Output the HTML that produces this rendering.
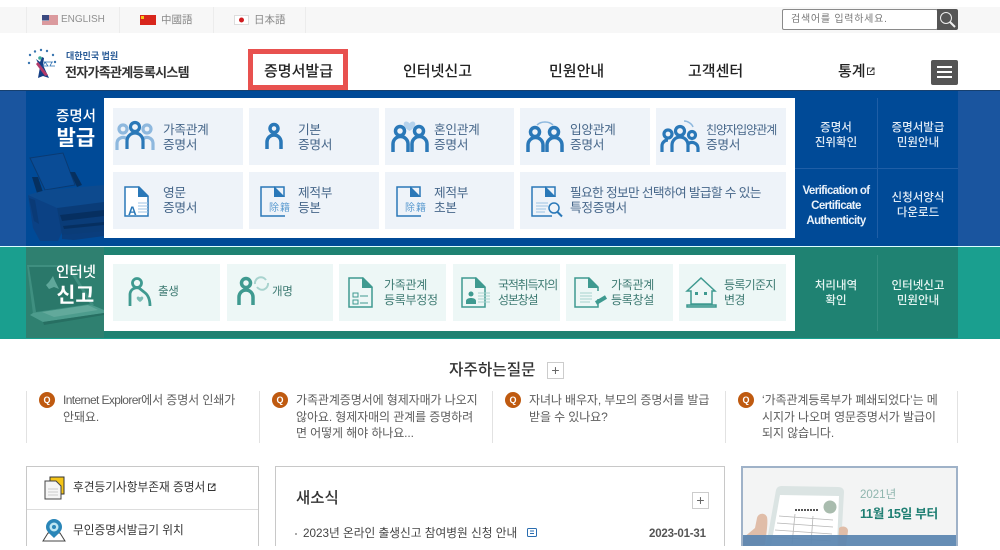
<!DOCTYPE html>
<html lang="ko"><head><meta charset="utf-8"><title>전자가족관계등록시스템</title>
<style>
*{box-sizing:border-box}
html,body{margin:0;padding:0}
body{width:1000px;height:550px;overflow:hidden;position:relative;background:#fff;font-family:"Liberation Sans","Noto Sans CJK KR",sans-serif;color:#333}
#w{position:absolute;left:0;top:0;width:1000px;height:546px;overflow:hidden}
.a{position:absolute}
.t{position:absolute;white-space:nowrap}
.nav{position:absolute;top:61px;font-size:15px;font-weight:500;color:#222;line-height:20px;white-space:nowrap;font-family:"Noto Sans CJK KR",sans-serif}
.tile{position:absolute;background:#eef3f9;height:57px}
.tile.g{background:#edf7f6}
.lbl{position:absolute;font-size:12.700px;line-height:15px;color:#47678a;white-space:nowrap;letter-spacing:-.3px}
.g .lbl{color:#3d7a72;font-size:12px}
.side{position:absolute;color:#dfeaf5;font-size:11.500px;line-height:15px;text-align:center;font-weight:500;white-space:nowrap}
.faq{position:absolute;top:392px;font-size:12px;line-height:16.500px;color:#5c5c5c;white-space:nowrap;letter-spacing:-.1px}
.q{position:absolute;top:392px;width:16px;height:16px;border-radius:50%;background:#bf5a10;color:#fff;font-size:9px;font-weight:700;line-height:16px;text-align:center}
.vl{position:absolute;top:391px;height:52px;width:1px;background:#e2e2e2}
.h{position:absolute;white-space:nowrap;font-weight:500;color:#333;font-family:"Noto Sans CJK KR",sans-serif}
.plus{position:absolute;width:17px;height:17px;border:1px solid #ccc;color:#666;font-size:14px;line-height:14px;text-align:center}
svg{position:absolute;overflow:visible}
</style></head><body><div id="w">
<div class="a" style="left:0;top:7px;width:1000px;height:26px;background:#f7f7f7"></div>
<div class="a" style="left:26px;top:7px;width:1px;height:26px;background:#ececec"></div>
<div class="a" style="left:119px;top:7px;width:1px;height:26px;background:#ececec"></div>
<div class="a" style="left:213px;top:7px;width:1px;height:26px;background:#ececec"></div>
<div class="a" style="left:305px;top:7px;width:1px;height:26px;background:#ececec"></div>
<svg style="left:42px;top:15px" width="16" height="10"><rect width="16" height="10" fill="#eee"/><path d="M0 1h16M0 3h16M0 5h16M0 7h16M0 9h16" stroke="#c8474f" stroke-width="1"/><rect width="7" height="5.500" fill="#3c4a80"/></svg>
<div class="t" style="left:61px;top:13px;font-size:10px;line-height:14px;color:#909090">ENGLISH</div>
<svg style="left:140px;top:15px" width="16" height="10"><rect width="16" height="10" fill="#d8261c"/><rect x="1" y="1" width="3" height="3" fill="#f5c518"/></svg>
<div class="t" style="left:161px;top:13px;font-size:10.500px;line-height:14px;color:#888">中國語</div>
<svg style="left:234px;top:15px" width="15" height="10"><rect x=".5" y=".5" width="14" height="9" fill="#fff" stroke="#ddd"/><circle cx="7.500" cy="5" r="2.500" fill="#d01c1f"/></svg>
<div class="t" style="left:254px;top:13px;font-size:10.500px;line-height:14px;color:#888">日本語</div>
<div class="a" style="left:782px;top:9px;width:156px;height:21px;background:#fff;border:1px solid #8a8a8a;border-radius:2px"></div>
<div class="t" style="left:791px;top:12.500px;font-size:10px;line-height:14px;color:#777;letter-spacing:.75px">검색어를 입력하세요.</div>
<div class="a" style="left:937px;top:9px;width:21px;height:21px;background:#555;border-radius:0 2px 2px 0"></div>
<svg style="left:937px;top:9px" width="21" height="21" fill="none" stroke="#eee"><circle cx="9" cy="9" r="5.500" stroke-width="1"/><path d="M13 13l5 5" stroke-width="2"/></svg>

<svg style="left:27px;top:48px" width="32" height="33"><g fill="#3a76b0"><circle cx="3" cy="7" r="1.200"/><circle cx="8" cy="3.500" r="1.200"/><circle cx="14" cy="2" r="1.200"/><circle cx="20" cy="3" r="1.200"/><circle cx="26" cy="7" r="1.200"/><circle cx="2" cy="15" r="1.200"/><circle cx="28" cy="14" r="1.200"/></g><path d="M9 11l4 3 2-5 2 1-1 7 6 13-6-2-5 2 2-11z" fill="#153f85"/><path d="M11 14l10 13-3 1-9-12z" fill="#b43a6a"/><circle cx="13" cy="10" r="1.800" fill="#3aa89a"/><path d="M17 14h9M18 14l-2 4h5zM25 14l-2 4h5" stroke="#2a6db0" fill="none" stroke-width=".8"/></svg>
<div class="t" style="left:66px;top:50px;font-size:9px;line-height:13px;font-weight:700;color:#2b5c97">대한민국 법원</div>
<div class="t" style="left:65px;top:63.500px;font-size:13px;line-height:18px;font-weight:700;color:#333;letter-spacing:-.7px">전자가족관계등록시스템</div>

<div class="a" style="left:248px;top:49px;width:100px;height:41px;border:5px solid #e8514f"></div>
<div class="nav" style="left:264px">증명서발급</div>
<div class="nav" style="left:403px">인터넷신고</div>
<div class="nav" style="left:549px">민원안내</div>
<div class="nav" style="left:688px">고객센터</div>
<div class="nav" style="left:838px">통계</div>
<svg style="left:867px;top:67px" width="8" height="8" fill="none" stroke="#333"><path d="M3.500 1H.5v6.500H7V4.500"/><path d="M3 5l4-4M4.500 1H7v2.500"/></svg>
<div class="a" style="left:931px;top:60px;width:27px;height:25px;background:#555;border-radius:2px"></div>
<div class="a" style="left:937px;top:66px;width:15px;height:2px;background:#fff"></div>
<div class="a" style="left:937px;top:71px;width:15px;height:2px;background:#fff"></div>
<div class="a" style="left:937px;top:76px;width:15px;height:2px;background:#fff"></div>

<!-- blue band -->
<div class="a" style="left:0;top:90px;width:1000px;height:156px;background:#1a559f"></div>
<div class="a" style="left:26px;top:91px;width:932px;height:155px;background:#004a97"></div>
<div class="a" style="left:0;top:90px;width:1000px;height:1px;background:#17406f"></div>
<div class="a" style="left:0;top:246px;width:1000px;height:1px;background:#dff"></div>
<svg style="left:26px;top:150px" width="78" height="90">
<path d="M4 8L37 3l12 32-30 5z" fill="#0a4c96" stroke="#0a3a72" stroke-width="1"/>
<path d="M6 27h6l5 15-6 1zM44 22h5l7 13-5 2z" fill="#06305f"/>
<path d="M2 45l18-5 58-5v20L31 60z" fill="#0d4a8e"/>
<path d="M2 45l29 13 5 24-4 9H14l-7-13z" fill="#0b4184"/>
<path d="M3 48l6 2 4 24-5-3z" fill="#0a3a76"/>
<path d="M31 58l47-6v31l-42 2z" fill="#0a3c78"/>
<path d="M34 65l44-5v6l-42 5zM37 76l41-4v3l-40 4z" fill="#062f60"/>
<path d="M36 85l42-4v5l-30 4-12-1z" fill="#0a3d7c"/>
</svg>
<div class="h" style="left:56px;top:106px;font-size:14.500px;line-height:20px;color:#fff">증명서</div>
<div class="h" style="left:56.500px;top:123px;font-size:21px;line-height:28px;font-weight:700;color:#fff">발급</div>
<div class="a" style="left:104px;top:98px;width:691px;height:140px;background:#fff"></div>

<div class="tile" style="left:113px;top:108px;width:130px"><svg style="left:2px;top:13px" width="42" height="30" fill="none" stroke="#8eb8de" stroke-width="3.200"><circle cx="8" cy="8" r="4"/><circle cx="32" cy="8" r="4"/><path d="M2 29V22a6 6 0 0 1 10-4M28 18a6 6 0 0 1 10 4v7"/><g stroke="#2a78b8"><circle cx="20" cy="6" r="4.500"/><path d="M12 28V20a8 8 0 0 1 16 0v8"/></g></svg><div class="lbl" style="left:50px;top:14.500px">가족관계<br>증명서</div></div>
<div class="tile" style="left:249px;top:108px;width:130px"><svg style="left:16px;top:15px" width="20" height="28" fill="none" stroke="#2a78b8" stroke-width="3.500"><circle cx="9" cy="5.500" r="4"/><path d="M2 26V19a7 7 0 0 1 14 0v7"/></svg><div class="lbl" style="left:49px;top:14.500px">기본<br>증명서</div></div>
<div class="tile" style="left:385px;top:108px;width:129px"><svg style="left:6px;top:11px" width="38" height="34" fill="none" stroke="#2a78b8" stroke-width="3.500"><path d="M18.500 12c-7-4-7-9-3.500-9.500 1.500 0 3 1 3.500 2 .5-1 2-2 3.500-2 3.500.5 3.500 5.500-3.500 9.500z" fill="#b5d2ec" stroke="none"/><circle cx="9" cy="12" r="4.500"/><path d="M2 33V25a7.500 7.500 0 0 1 15 0v8"/><circle cx="28" cy="12" r="4.500"/><path d="M21 33V25a7.500 7.500 0 0 1 15 0v8"/></svg><div class="lbl" style="left:49px;top:14.500px">혼인관계<br>증명서</div></div>
<div class="tile" style="left:520px;top:108px;width:130px"><svg style="left:6px;top:11px" width="38" height="34" fill="none" stroke="#2a78b8" stroke-width="3.500"><path d="M11 6c4-4 12-4 16 0" stroke="#8eb8de" stroke-width="1.500"/><circle cx="9" cy="13" r="4.500"/><path d="M2 33V26a7.500 7.500 0 0 1 15 0v7"/><circle cx="28" cy="13" r="4.500"/><path d="M21 33V26a7.500 7.500 0 0 1 15 0v7"/></svg><div class="lbl" style="left:50px;top:14.500px">입양관계<br>증명서</div></div>
<div class="tile" style="left:656px;top:108px;width:130px"><svg style="left:4px;top:11px" width="40" height="34" fill="none" stroke="#2a78b8" stroke-width="3.200"><path d="M24 2c4 0 8 3 9 6" stroke="#8eb8de" stroke-width="1.500"/><circle cx="8" cy="15" r="4"/><path d="M2 33V27a6 6 0 0 1 6-6"/><circle cx="20" cy="12" r="4.500"/><path d="M12 33V26a8 8 0 0 1 16 0v7"/><circle cx="32" cy="16" r="3.500"/><path d="M28 25a6 6 0 0 1 10 4v4"/></svg><div class="lbl" style="left:50px;top:14.500px;font-size:12px;letter-spacing:-1px">친양자입양관계<br><span style="font-size:12.700px;letter-spacing:-.3px">증명서</span></div></div>

<div class="tile" style="left:113px;top:172px;width:130px"><svg style="left:11px;top:14px" width="26" height="31" fill="none"><path d="M1 1h14l9 9v20H1z" fill="#fff" stroke="#2a78b8" stroke-width="1.500"/><path d="M14 0l11 11H14z" fill="#2a78b8"/><path d="M14 17h10M14 20h10M14 23h10M14 26h10" stroke="#9cc3e4"/></svg><div class="t" style="left:15px;top:33px;font-size:12px;line-height:13px;font-weight:700;color:#2a78b8">A</div><div class="lbl" style="left:50px;top:14px">영문<br>증명서</div></div>
<div class="tile" style="left:249px;top:172px;width:130px"><svg style="left:11px;top:14px" width="26" height="31" fill="none"><path d="M24 11V1H1v29h24" stroke="#2a78b8" stroke-width="1.500"/><path d="M14 0l11 11H14z" fill="#2a78b8"/></svg><div class="t" style="left:20px;top:30px;font-size:10px;line-height:13px;color:#5b9bd0;letter-spacing:1px;background:#eef3f9">除籍</div><div class="lbl" style="left:49px;top:14px">제적부<br>등본</div></div>
<div class="tile" style="left:385px;top:172px;width:129px"><svg style="left:11px;top:14px" width="26" height="31" fill="none"><path d="M24 11V1H1v29h24" stroke="#2a78b8" stroke-width="1.500"/><path d="M14 0l11 11H14z" fill="#2a78b8"/></svg><div class="t" style="left:20px;top:30px;font-size:10px;line-height:13px;color:#5b9bd0;letter-spacing:1px;background:#eef3f9">除籍</div><div class="lbl" style="left:49px;top:14px">제적부<br>초본</div></div>
<div class="tile" style="left:520px;top:172px;width:266px"><svg style="left:11px;top:14px" width="32" height="31" fill="none"><path d="M24 11V1H1v29h20" stroke="#2a78b8" stroke-width="1.500"/><path d="M14 0l11 11H14z" fill="#2a78b8"/><path d="M5 17h12M5 20h12M5 23h10M5 26h9" stroke="#9cc3e4"/><circle cx="23" cy="22" r="5" stroke="#2a78b8" stroke-width="1.500"/><path d="M26.500 26l4.500 4.500" stroke="#2a78b8" stroke-width="2"/></svg><div class="lbl" style="left:50px;top:14px;letter-spacing:-.65px">필요한 정보만 선택하여 발급할 수 있는<br><span style="letter-spacing:-.3px">특정증명서</span></div></div>

<div class="a" style="left:877px;top:98px;width:1px;height:140px;background:#1f5ea6"></div>
<div class="a" style="left:795px;top:168px;width:163px;height:1px;background:#1f5ea6"></div>
<div class="side" style="left:795px;top:121px;width:82px">증명서<br>진위확인</div>
<div class="side" style="left:878px;top:121px;width:80px">증명서발급<br>민원안내</div>
<div class="side" style="left:795px;top:183.500px;width:82px;letter-spacing:-.6px;font-weight:700;color:#eaf2fa">Verification of<br>Certificate<br>Authenticity</div>
<div class="side" style="left:878px;top:191px;width:80px">신청서양식<br>다운로드</div>

<!-- teal band -->
<div class="a" style="left:0;top:247px;width:1000px;height:92px;background:#1a9f8f"></div>
<div class="a" style="left:26px;top:247px;width:932px;height:91px;background:#1f8272"></div>
<div class="a" style="left:26px;top:247px;width:78px;height:91px;background:#2f8070"></div>
<svg style="left:26px;top:250px" width="78" height="88">
<path d="M1 15h42l25 40-61 9z" fill="#3f8f80"/>
<path d="M3 17h38l23 37-54 8z" fill="#2a786a"/>
<path d="M4 65l3-2 59-8 12 5v3L17 72z" fill="#4d9c8d"/>
<path d="M16 62l46-7 10 5-44 7z" fill="#62a99b"/>
<path d="M17 72l61-9v2l-60 10z" fill="#276f62"/>
<path d="M20 35l3-3 4-6 2 5 4 8-5-2-5 2z" fill="#5fa79a"/>
</svg>
<div class="h" style="left:56px;top:262px;font-size:14.500px;line-height:20px;color:#fff">인터넷</div>
<div class="h" style="left:56.500px;top:279px;font-size:20.500px;line-height:28px;font-weight:700;color:#fff">신고</div>
<div class="a" style="left:104px;top:255px;width:691px;height:76px;background:#fff"></div>

<div class="tile g" style="left:113px;top:264px;width:107px"><svg style="left:15px;top:13px" width="24" height="30" fill="none" stroke="#3f9a90" stroke-width="2.800"><circle cx="9" cy="6" r="4.500"/><path d="M2 29V17a7 7 0 0 1 9-6l5 4c3 2 6 6 6 14"/><path d="M12 25c-4-2.500-4-5-2-5.500 1 0 1.500.5 2 1 .5-.5 1-1 2-1 2 .5 2 3-2 5.500z" fill="#7bbcb5" stroke="none"/></svg><div class="lbl" style="left:45px;top:20.500px;font-size:11.500px">출생</div></div>
<div class="tile g" style="left:227px;top:264px;width:106px"><svg style="left:10px;top:13px" width="40" height="30" fill="none"><g stroke="#3f9a90" stroke-width="3.500"><circle cx="9" cy="6" r="4.500"/><path d="M2 28V20a7 7 0 0 1 14 0v8"/></g><path d="M18 7a6 6 0 0 1 11-4M31 6a6 6 0 0 1-11 4" stroke="#a8d3ce" stroke-width="2"/></svg><div class="lbl" style="left:45px;top:20.500px;font-size:11.500px">개명</div></div>
<div class="tile g" style="left:339px;top:264px;width:107px"><svg style="left:9px;top:13px" width="26" height="31" fill="none"><path d="M1 1h14l9 9v20H1z" stroke="#3f9a90" stroke-width="1.500"/><path d="M14 0l11 11H14z" fill="#3f9a90"/><path d="M5 16h5v4H5zM5 23h5v4H5zM12 19h8M12 26h8" stroke="#3f9a90"/></svg><div class="lbl" style="left:45px;top:14px">가족관계<br>등록부정정</div></div>
<div class="tile g" style="left:453px;top:264px;width:107px"><svg style="left:8px;top:13px" width="32" height="31" fill="none"><path d="M1 1h14l9 9v20H1z" stroke="#3f9a90" stroke-width="1.500"/><path d="M14 0l11 11H14z" fill="#3f9a90"/><circle cx="10" cy="17" r="2.500" fill="#3f9a90"/><path d="M5 27v-3c0-4 10-4 10 0v3z" fill="#3f9a90"/><path d="M17 16h12M17 19h12M17 22h12M17 25h12" stroke="#a8d3ce"/></svg><div class="lbl" style="left:45px;top:14px;letter-spacing:-1.200px">국적취득자의<br>성본창설</div></div>
<div class="tile g" style="left:566px;top:264px;width:107px"><svg style="left:8px;top:13px" width="36" height="31" fill="none"><path d="M24 22v8H1V1h14l9 9v4" stroke="#3f9a90" stroke-width="1.500"/><path d="M14 0l11 11H14z" fill="#3f9a90"/><path d="M6 16h12M6 19h12M6 22h12M6 25h10" stroke="#a8d3ce"/><path d="M22 26l10-6" stroke="#3f9a90" stroke-width="4"/></svg><div class="lbl" style="left:45px;top:14px">가족관계<br>등록창설</div></div>
<div class="tile g" style="left:679px;top:264px;width:107px"><svg style="left:7px;top:13px" width="32" height="31" fill="none" stroke="#3f9a90" stroke-width="1.500"><path d="M1 14L15 1l14 13h-3v13H5V14z"/><path d="M1 28h29v2H1z" fill="#a8d3ce"/><rect x="9" y="15" width="3" height="3" fill="#3f9a90" stroke="none"/><rect x="18" y="15" width="3" height="3" fill="#3f9a90" stroke="none"/></svg><div class="lbl" style="left:45px;top:14px;letter-spacing:-.7px">등록기준지<br>변경</div></div>

<div class="a" style="left:877px;top:255px;width:1px;height:76px;background:#348f80"></div>
<div class="side" style="left:795px;top:279px;width:82px;color:#e6f5f2">처리내역<br>확인</div>
<div class="side" style="left:878px;top:279px;width:80px;color:#e6f5f2">인터넷신고<br>민원안내</div>

<!-- faq -->
<div class="h" style="left:449px;top:359px;font-size:15.700px;line-height:20px">자주하는질문</div>
<div class="plus" style="left:547px;top:362px">+</div>
<div class="vl" style="left:26px"></div><div class="vl" style="left:259px"></div><div class="vl" style="left:492px"></div><div class="vl" style="left:725px"></div><div class="vl" style="left:957px"></div>
<div class="q" style="left:39px">Q</div>
<div class="faq" style="left:63px"><span style="letter-spacing:-.62px">Internet Explorer</span>에서 증명서 인쇄가<br>안돼요.</div>
<div class="q" style="left:272px">Q</div>
<div class="faq" style="left:296px">가족관계증명서에 형제자매가 나오지<br>않아요. 형제자매의 관계를 증명하려<br>면 어떻게 해야 하나요...</div>
<div class="q" style="left:505px">Q</div>
<div class="faq" style="left:529px">자녀나 배우자, 부모의 증명서를 발급<br>받을 수 있나요?</div>
<div class="q" style="left:738px">Q</div>
<div class="faq" style="left:762px">‘가족관계등록부가 폐쇄되었다’는 메<br>시지가 나오며 영문증명서가 발급이<br>되지 않습니다.</div>

<!-- bottom left -->
<div class="a" style="left:26px;top:466px;width:233px;height:90px;border:1px solid #c8c8c8"></div>
<div class="a" style="left:27px;top:509px;width:231px;height:1px;background:#ddd"></div>
<svg style="left:44px;top:476px" width="21" height="24"><rect x="6" y="1" width="14" height="17" fill="#f5c518" stroke="#333"/><path d="M1 5h11l5 5v13H1z" fill="#f5f5f5" stroke="#444"/><path d="M4 13h10M4 16h10M4 19h10" stroke="#ccc"/></svg>
<div class="t" style="left:73px;top:480px;font-size:11.700px;line-height:16px;color:#333">후견등기사항부존재 증명서</div>
<svg style="left:208px;top:483px" width="8" height="8" fill="none" stroke="#333"><path d="M3.500 1H.5v6.500H7V4.500"/><path d="M3 5l4-4M4.500 1H7v2.500"/></svg>
<svg style="left:42px;top:518px" width="24" height="24"><path d="M1 23l5-8h12l5 8z" fill="none" stroke="#444"/><path d="M12 20c-5-5-8-7-8-11a8 8 0 0 1 16 0c0 4-3 6-8 11z" fill="#2a86b8"/><circle cx="12" cy="9" r="4.500" fill="#bde6f2"/><circle cx="12" cy="9" r="2" fill="#2a86b8"/></svg>
<div class="t" style="left:73px;top:523px;font-size:11.700px;line-height:16px;color:#333">무인증명서발급기 위치</div>

<!-- news -->
<div class="a" style="left:275px;top:466px;width:450px;height:90px;border:1px solid #c8c8c8"></div>
<div class="h" style="left:296px;top:487px;font-size:15.500px;line-height:20px">새소식</div>
<div class="plus" style="left:692px;top:492px">+</div>
<div class="a" style="left:295px;top:533px;width:2px;height:2px;background:#aaa"></div>
<div class="t" style="left:303px;top:526px;font-size:11.700px;line-height:16px;color:#444">2023년 온라인 출생신고 참여병원 신청 안내</div>
<svg style="left:527px;top:528px" width="10" height="9" fill="none" stroke="#2a6db0"><rect x=".5" y=".5" width="9" height="8" rx="1"/><path d="M3 3h4M3 5.500h4"/></svg>
<div class="t" style="left:649px;top:526px;font-size:11.500px;line-height:16px;font-weight:700;color:#555;letter-spacing:-.2px">2023-01-31</div>

<!-- banner -->
<div class="a" style="left:741px;top:466px;width:217px;height:90px;background:#f3f4f4;border:2px solid #9fb2c8;border-bottom:0"></div>
<svg style="left:743px;top:468px" width="213" height="78">
<path d="M33 22c1-3 3-4 6-4l56 1c4 0 6 2 6 5l-3 54H23z" fill="#dbe4e3"/>
<path d="M37 27l59 1-2 50H28z" fill="#fff"/>
<path d="M52 42h24" stroke="#555" stroke-width="2" stroke-dasharray="2 1"/>
<circle cx="87" cy="39" r="6.500" fill="#a9bcae"/>
<path d="M36 48l54 4M34 55l56 4M32 62l57 4M30 69l58 4M52 46l-3 30M70 48l-2 28" stroke="#b5b5b5" stroke-width=".8"/>
<path d="M0 78V70L12 60l2-10c1-5 8-6 10-1 1 5 0 12-2 28z" fill="#e0bda8"/>
<path d="M96 60c4-3 9-1 9 3l-2 15h-8z" fill="#e0bda8"/>
<rect x="0" y="67" width="213" height="11" fill="#5b86b0" fill-opacity=".94"/>
</svg>
<div class="t" style="left:860px;top:487px;font-size:11.500px;line-height:16px;color:#8fb5ae">2021년</div>
<div class="t" style="left:860px;top:505px;font-size:12.700px;line-height:18px;font-weight:700;color:#1f7f73;letter-spacing:-.35px">11월 15일 부터</div>
</div></body></html>
